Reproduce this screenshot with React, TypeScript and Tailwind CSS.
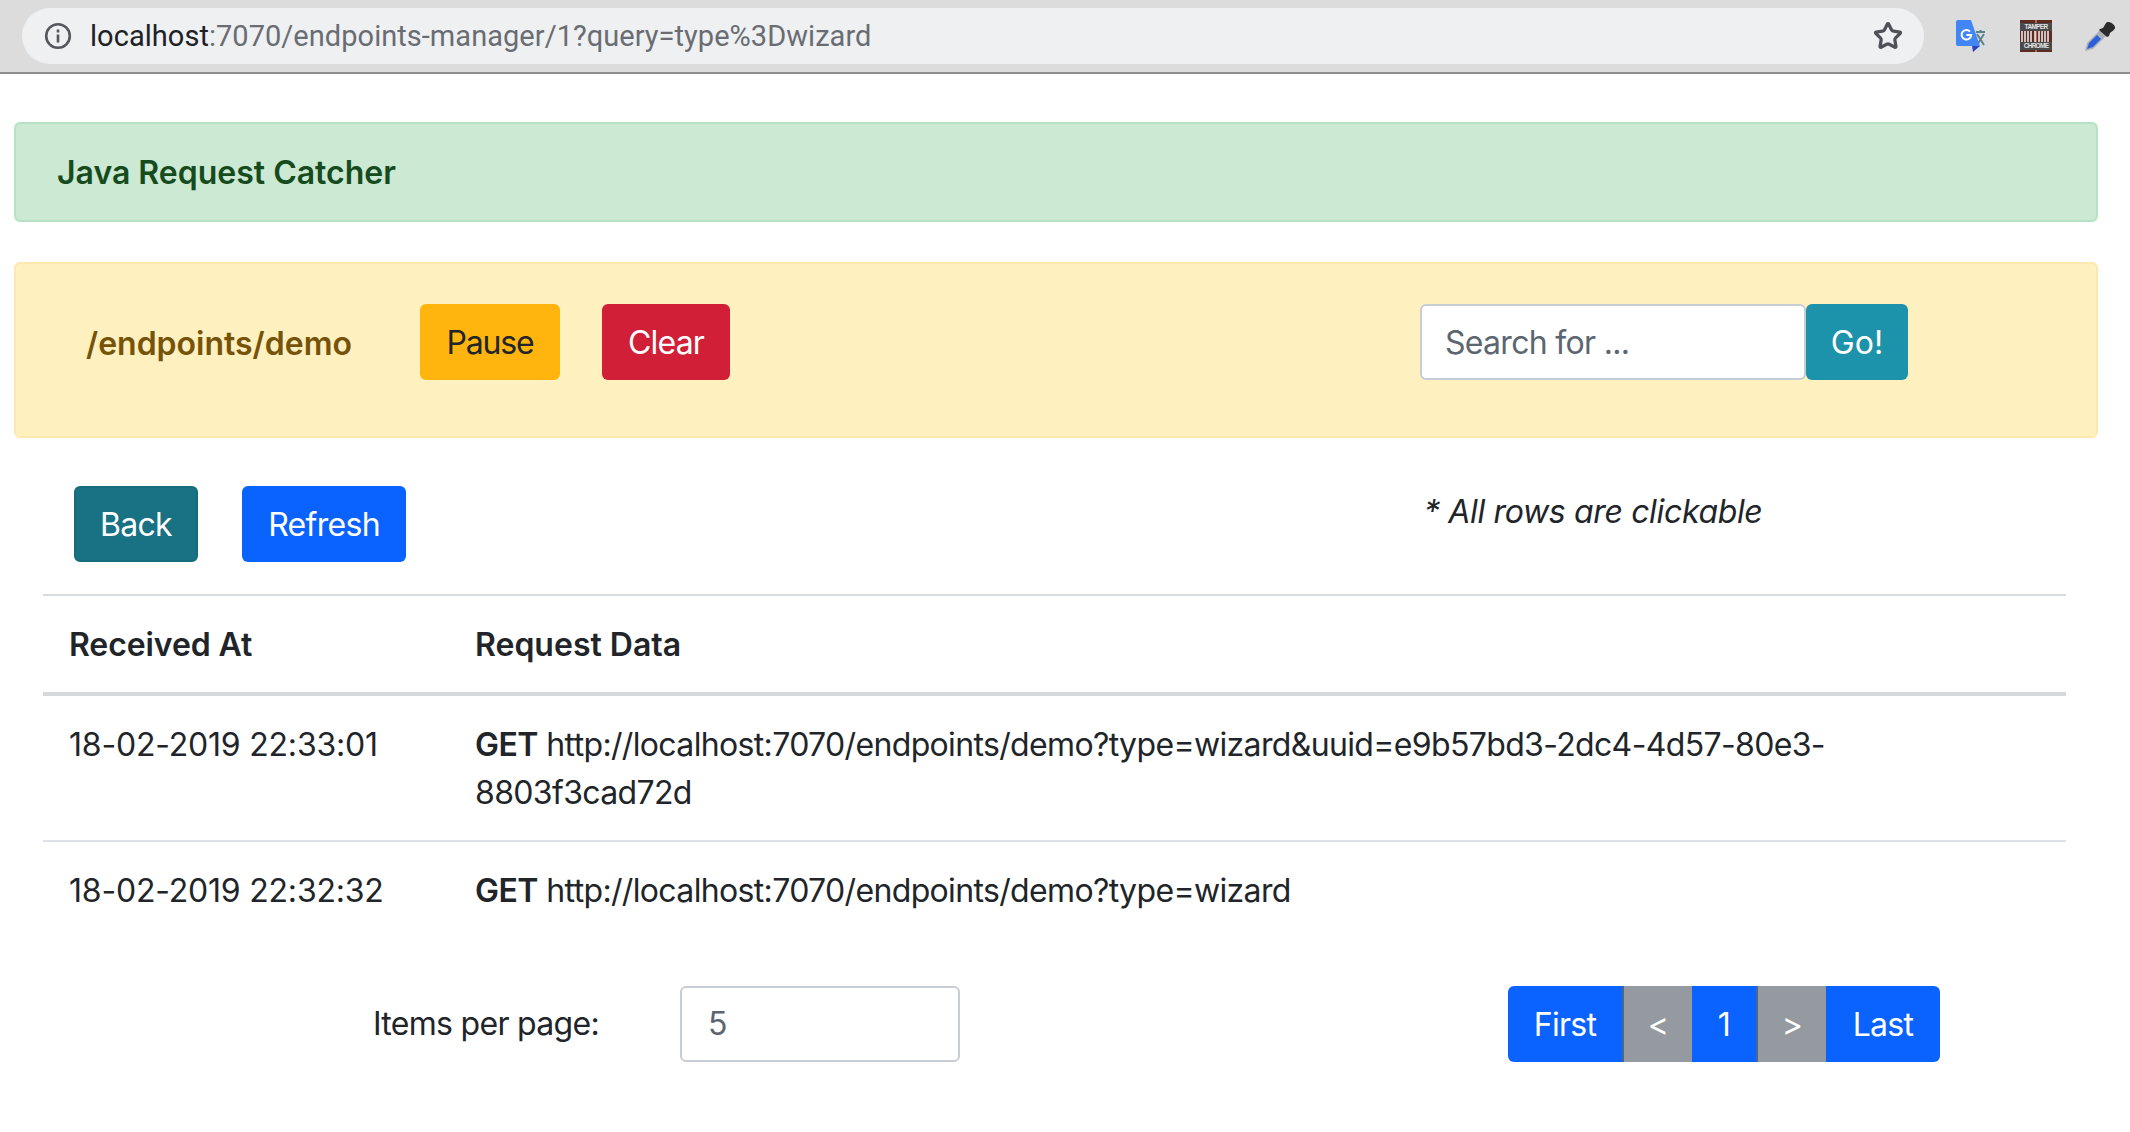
import { Star } from 'lucide-react';

const btn = 'flex h-[76px] items-center justify-center rounded-[6px] pt-[1px] text-[32px] text-white';

const BrowserBar = () => (
  <div className="flex h-[74px] items-start border-b-2 border-[#8f8f8f] bg-[#dcdcdc] pl-[22px] pt-2">
    <div className="flex h-14 w-[1902px] items-center rounded-[28px] bg-[#eff0f2] pl-[22px] pr-[21px]">
      <svg width="28" height="28" viewBox="0 0 28 28" fill="none" stroke="#54575c" strokeWidth="2.6">
        <circle cx="14" cy="14" r="11.8" />
        <path d="M14 12.5v8M14 7.5v3" />
      </svg>
      <span className="ml-[18px] font-['Roboto',sans-serif] text-[29px] tracking-[0.04px] text-[#696d73]">
        <span className="text-[#202124]">localhost</span>:7070/endpoints-manager/1?query=type%3Dwizard
      </span>
      <Star className="ml-auto" size={30} color="#4e5155" strokeWidth={2.6} />
    </div>
    <div className="ml-[32px] mt-3 flex items-center">
      <svg width="32" height="32" viewBox="0 0 32 32">
        <rect x="14" y="6" width="18" height="25" rx="1" fill="#d9dcdf" />
        <path d="M20 12h9M24.5 10v2M21 25l7-11M28 25l-7-11" stroke="#5f8086" strokeWidth="2" fill="none" />
        <path d="M0 2a2 2 0 0 1 2-2h13l9 26H2a2 2 0 0 1-2-2z" fill="#4285f4" />
        <path d="M16 26h8l-7 6z" fill="#2a46b8" />
        <path d="M14 11.5a4.8 4.8 0 1 0 1.2 3.6H10.4" stroke="#fff" strokeWidth="2" fill="none" />
      </svg>
      <div className="relative ml-[32px] flex h-8 w-8 flex-col items-center justify-center bg-[#5b2c22] font-['Liberation_Sans',sans-serif] text-[6.5px] font-bold leading-[8px] text-[#e4e4e4]">
        <span className="absolute top-0 h-8 w-[2px] bg-[#c0604a]" />
        <span className="relative w-full bg-[#4a4a4a] text-center">TAMPER</span>
        <svg className="relative" width="30" height="11" viewBox="0 0 30 11">
          <path d="M1 0v11M4 0v11M7 0v11M10 0v11M14 0v11M18 0v11M21 0v11M24 0v11M27 0v11" stroke="#e8e8e8" strokeWidth="1.6" />
        </svg>
        <span className="relative w-full bg-[#4a4a4a] text-center">CHROME</span>
      </div>
      <svg className="ml-[32px]" width="32" height="32" viewBox="0 0 32 32">
        <path d="M1 31l2-8L17 9l6 6L9 29z" fill="#a9b0b8" />
        <path d="M3 29l2-6L13 15l4 4-8 8z" fill="#2f5fd8" />
        <path d="M16 9l3-1 3-5c2-2.5 8 .5 9 4 .5 2-1.5 3.5-5 6l-1 3-2 1-8-7z" fill="#2b2b2b" />
      </svg>
    </div>
  </div>
);

const rows = [
  {
    at: '18-02-2019 22:33:01',
    url: 'http://localhost:7070/endpoints/demo?type=wizard&uuid=e9b57bd3-2dc4-4d57-80e3-8803f3cad72d',
  },
  { at: '18-02-2019 22:32:32', url: 'http://localhost:7070/endpoints/demo?type=wizard' },
];

const App = () => (
  <div className="min-h-[1132px] bg-white font-['Inter',sans-serif] text-[32px] leading-[48px] tracking-[-0.7px] text-[#212529]">
    <BrowserBar />
    <div className="pl-[14px] pr-[32px] pt-12">
      <div className="flex h-[100px] items-center rounded-[6px] border-2 border-[#b8e2c4] bg-[#cce9d3] pl-[41px] pt-[2px] font-semibold tracking-normal text-[#164b1e]">
        Java Request Catcher
      </div>
      <div className="mt-10 flex h-[176px] items-start rounded-[6px] border-2 border-[#fde8b0] bg-[#fff0c0] pt-10">
        <div className="ml-[70px] mt-4 w-[334px] font-semibold tracking-normal text-[#755409]">/endpoints/demo</div>
        <button className={`${btn} w-[140px] bg-[#ffb40e] !text-[#212529] tracking-[-1.2px]`}>Pause</button>
        <button className={`${btn} ml-[42px] w-[128px] bg-[#d01f37] tracking-[-0.8px]`}>Clear</button>
        <div className="ml-[690px] flex">
          <div className="flex h-[76px] w-[386px] items-center rounded-[6px] border-2 border-[#c6cdd5] bg-white pl-[23px] pt-[1px] text-[#5c6670]">
            Search for ...
          </div>
          <button className={`${btn} w-[102px] bg-[#1c92ab] tracking-normal`}>Go!</button>
        </div>
      </div>
      <div className="mt-12 flex items-start pl-[60px]">
        <button className={`${btn} w-[124px] border-2 border-[#166c7c] bg-[#187283]`}>Back</button>
        <button className={`${btn} ml-11 w-[164px] bg-[#0b63ff]`}>Refresh</button>
        <div className="ml-[1018px] pt-[2px] italic tracking-[-0.35px]">* All rows are clickable</div>
      </div>
      <table className="ml-[29px] mt-[32px] w-[2023px] table-fixed border-collapse text-left">
        <thead>
          <tr className="border-t-2 border-b-4 border-t-[#d9dcdf] border-b-[#d5d9de]">
            <th className="h-[99px] w-[432px] pl-[26px] pt-[2px] align-middle font-semibold tracking-[-0.1px]">Received At</th>
            <th className="pr-[216px] pt-[2px] align-middle font-semibold tracking-normal">Request Data</th>
          </tr>
        </thead>
        <tbody>
          {rows.map((r, i) => (
            <tr key={r.at} className={i === 0 ? 'border-b-2 border-[#dee2e6]' : ''}>
              <td className="pb-[23px] pl-[26px] pt-[25px] align-top tracking-[-0.2px]">{r.at}</td>
              <td className="pb-[23px] pr-[216px] pt-[25px] align-top tracking-[-0.65px]">
                <b className="font-semibold tracking-[-0.5px]">GET</b> {r.url}
              </td>
            </tr>
          ))}
        </tbody>
      </table>
      <div className="mt-[48px] flex items-center">
        <span className="ml-[359px] w-[307px]">Items per page:</span>
        <div className="flex h-[76px] w-[280px] items-center rounded-[6px] border-2 border-[#c6cdd5] pl-[26px] text-[#5c6670]">5</div>
        <div className="ml-[548px] flex overflow-hidden rounded-[6px]">
          <button className={`${btn} w-[116px] rounded-none border-r-2 border-[#4a668f] bg-[#0b63ff]`}>First</button>
          <button className={`${btn} w-[68px] rounded-none bg-[#959aa1]`}>&lt;</button>
          <button className={`${btn} w-[66px] rounded-none border-r-2 border-[#4a668f] bg-[#0b63ff]`}>1</button>
          <button className={`${btn} w-[68px] rounded-none bg-[#959aa1]`}>&gt;</button>
          <button className={`${btn} w-[114px] rounded-none bg-[#0b63ff]`}>Last</button>
        </div>
      </div>
    </div>
  </div>
);

export default App;
